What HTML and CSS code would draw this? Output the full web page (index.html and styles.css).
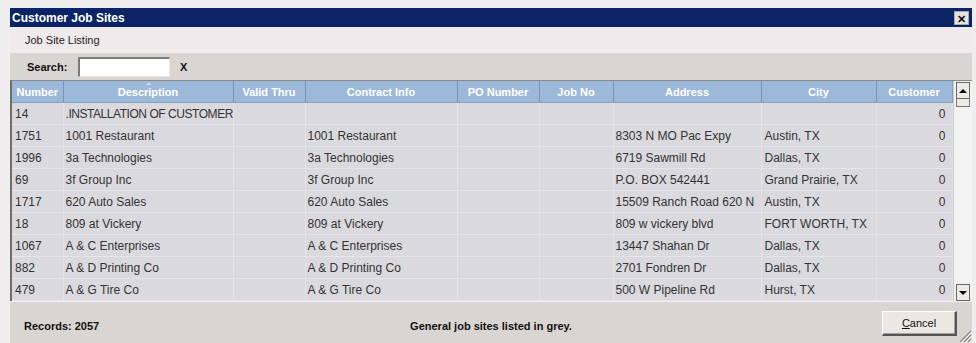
FILE: index.html
```html
<!DOCTYPE html>
<html>
<head>
<meta charset="utf-8">
<title>Customer Job Sites</title>
<link rel="stylesheet" href="styles.css">
</head>
<body>
<div class="window">
  <div class="titlebar">
    <span class="title">Customer Job Sites</span>
    <span class="close">&#x2715;</span>
  </div>
  <div class="toolbar">Job Site Listing</div>
  <div class="searchbar">
    <span class="search-label">Search:</span>
    <span class="search-input"></span>
    <span class="search-clear">X</span>
  </div>
  <div class="grid">
    <table class="table">
      <colgroup>
        <col class="c1"><col class="c2"><col class="c3"><col class="c4"><col class="c5"><col class="c6"><col class="c7"><col class="c8"><col class="c9">
      </colgroup>
      <thead>
        <tr>
          <th>Number</th>
          <th class="sorted">Description<span class="sort"></span></th>
          <th>Valid Thru</th>
          <th>Contract Info</th>
          <th>PO Number</th>
          <th>Job No</th>
          <th>Address</th>
          <th>City</th>
          <th>Customer</th>
        </tr>
      </thead>
      <tbody>
        <tr><td class="num">14</td><td class="tight">.INSTALLATION OF CUSTOMER</td><td></td><td></td><td></td><td></td><td></td><td></td><td class="cust">0</td></tr>
        <tr><td class="num">1751</td><td>1001 Restaurant</td><td></td><td>1001 Restaurant</td><td></td><td></td><td>8303 N MO Pac Expy</td><td class="city">Austin, TX</td><td class="cust">0</td></tr>
        <tr><td class="num">1996</td><td>3a Technologies</td><td></td><td>3a Technologies</td><td></td><td></td><td>6719 Sawmill Rd</td><td class="city">Dallas, TX</td><td class="cust">0</td></tr>
        <tr><td class="num">69</td><td>3f Group Inc</td><td></td><td>3f Group Inc</td><td></td><td></td><td>P.O. BOX 542441</td><td class="city">Grand Prairie, TX</td><td class="cust">0</td></tr>
        <tr><td class="num">1717</td><td>620 Auto Sales</td><td></td><td>620 Auto Sales</td><td></td><td></td><td>15509 Ranch Road 620 N</td><td class="city">Austin, TX</td><td class="cust">0</td></tr>
        <tr><td class="num">18</td><td>809 at Vickery</td><td></td><td>809 at Vickery</td><td></td><td></td><td>809 w vickery blvd</td><td class="city">FORT WORTH, TX</td><td class="cust">0</td></tr>
        <tr><td class="num">1067</td><td>A &amp; C Enterprises</td><td></td><td>A &amp; C Enterprises</td><td></td><td></td><td>13447 Shahan Dr</td><td class="city">Dallas, TX</td><td class="cust">0</td></tr>
        <tr><td class="num">882</td><td>A &amp; D Printing Co</td><td></td><td>A &amp; D Printing Co</td><td></td><td></td><td>2701 Fondren Dr</td><td class="city">Dallas, TX</td><td class="cust">0</td></tr>
        <tr><td class="num">479</td><td>A &amp; G Tire Co</td><td></td><td>A &amp; G Tire Co</td><td></td><td></td><td>500 W Pipeline Rd</td><td class="city">Hurst, TX</td><td class="cust">0</td></tr>
      </tbody>
    </table>
    <div class="scrollbar">
      <div class="sb-btn"><span class="arrow-up"></span></div>
      <div class="sb-thumb"></div>
      <div class="sb-track"></div>
      <div class="sb-btn"><span class="arrow-down"></span></div>
    </div>
  </div>
  <div class="footer">
    <span class="records">Records: 2057</span>
    <span class="note">General job sites listed in grey.</span>
    <span class="btn-wrap"><button class="cancel"><u>C</u>ancel</button></span>
    <svg class="grip" width="14" height="14" viewBox="0 0 14 14">
      <path d="M13 2 L2 13 M13 6 L6 13 M13 10 L10 13" stroke="#8a8a8a" stroke-width="1.2" fill="none"/>
      <path d="M14 3 L3 14 M14 7 L7 14 M14 11 L11 14" stroke="#ffffff" stroke-width="1" fill="none"/>
    </svg>
  </div>
</div>
</body>
</html>
```

FILE: styles.css
```css
html, body {
  margin: 0;
  padding: 0;
}
body {
  background: #efeded;
  font-family: "Liberation Sans", Arial, sans-serif;
  width: 976px;
  height: 343px;
  overflow: hidden;
}
.window {
  margin: 8px 0 0 10px;
  width: 962px;
  height: 335px;
  background: #d9d5d2;
  position: relative;
}
.titlebar {
  height: 19px;
  background: #0b2466;
  color: #fff;
  display: flex;
  align-items: center;
  justify-content: space-between;
  padding: 0 3px 0 2px;
}
.title {
  font-weight: bold;
  font-size: 12px;
}
.close {
  width: 15px;
  height: 14px;
  background: #e6e3de;
  color: #111;
  font-size: 11px;
  font-weight: bold;
  line-height: 14px;
  text-align: center;
  box-sizing: border-box;
  border: 1px solid #a8a8a8;
}
.toolbar {
  height: 26px;
  box-sizing: border-box;
  background: #f1eaec;
  font-size: 11px;
  color: #222;
  padding: 7px 0 0 15px;
}
.searchbar {
  height: 27px;
  display: flex;
  align-items: center;
  font-size: 11px;
  font-weight: bold;
  color: #111;
  background: #d9d5d2;
}
.search-label {
  margin-left: 17px;
  width: 51px;
}
.search-input {
  width: 92px;
  height: 20px;
  box-sizing: border-box;
  background: #fff;
  border-top: 2px solid #7a7a7a;
  border-left: 2px solid #7a7a7a;
  border-right: 1px solid #e8e8e8;
  border-bottom: 1px solid #e8e8e8;
}
.search-clear {
  margin-left: 10px;
}
.grid {
  display: flex;
  height: 221px;
  border-top: 1px solid #888;
  box-sizing: border-box;
  border-left: 2px solid #6e6e6e;
}
.table {
  table-layout: fixed;
  border-collapse: collapse;
  width: 940px;
  font-size: 12px;
}
.c1 { width: 51px; }
.c2 { width: 170px; }
.c3 { width: 72px; }
.c4 { width: 152px; }
.c5 { width: 82px; }
.c6 { width: 74px; }
.c7 { width: 148px; }
.c8 { width: 115px; }
.c9 { width: 76px; }
th {
  height: 21px;
  padding: 0;
  background: #9db9da;
  color: #fff;
  font-size: 11px;
  font-weight: bold;
  border-right: 1px solid #7d92ad;
  border-bottom: 1px solid #8aa0bc;
  text-align: center;
  white-space: nowrap;
  overflow: hidden;
  position: relative;
}
th:last-child {
  border-right: 1px solid #8aa0bc;
}
.sort {
  position: absolute;
  left: 82px;
  top: 1px;
  width: 0;
  height: 0;
  border-left: 3px solid transparent;
  border-right: 3px solid transparent;
  border-bottom: 3px solid #c8d6e8;
}
td {
  height: 21px;
  padding: 0 2px;
  background: #dad9de;
  color: #333;
  border-right: 1px solid #e4e3e8;
  border-bottom: 1px solid #e6e5ea;
  white-space: nowrap;
  overflow: hidden;
}
td.tight {
  letter-spacing: -0.45px;
}
tbody tr:first-child td {
  border-top: 1px solid #ead9dc;
}
td.num { padding-left: 3px; }
td.city { padding-left: 3px; }
td.cust {
  text-align: right;
  padding-right: 6px;
}
.scrollbar {
  display: flex;
  flex-direction: column;
  background: #f3f3f3;
  padding: 1px 2px 0 2px;
  box-sizing: border-box;
  width: 20px;
  border-left: 1px solid #c8c8c8;
}
.sb-btn {
  height: 17px;
  background: #ecebe8;
  border: 1px solid #666;
  box-sizing: border-box;
  display: flex;
  align-items: center;
  justify-content: center;
}
.sb-thumb {
  height: 8px;
  background: #ecebe8;
  border: 1px solid #777;
  border-top: none;
  box-sizing: border-box;
}
.sb-track {
  flex: 1;
}
.arrow-up {
  width: 0;
  height: 0;
  border-left: 4px solid transparent;
  border-right: 4px solid transparent;
  border-bottom: 4px solid #000;
}
.arrow-down {
  width: 0;
  height: 0;
  border-left: 4px solid transparent;
  border-right: 4px solid transparent;
  border-top: 4px solid #000;
}
.footer {
  height: 42px;
  display: grid;
  grid-template-columns: 1fr auto 1fr;
  align-items: center;
  font-size: 11px;
  font-weight: bold;
  color: #111;
  border-top: 1px solid #f2f0ee;
  box-sizing: border-box;
  position: relative;
}
.records {
  padding-left: 14px;
  padding-top: 6px;
}
.note {
  padding-top: 6px;
}
.btn-wrap {
  justify-self: end;
  margin-right: 15px;
  padding-top: 2px;
}
.cancel {
  width: 75px;
  height: 25px;
  background: #ebe8e4;
  font-family: "Liberation Sans", Arial, sans-serif;
  font-size: 11px;
  color: #111;
  border: 1px solid #fff;
  border-right: 2px solid #555;
  border-bottom: 2px solid #555;
  box-shadow: inset -1px -1px 0 #a0a0a0;
  padding: 0;
}
.grip {
  position: absolute;
  right: 0;
  bottom: 0;
}
```
